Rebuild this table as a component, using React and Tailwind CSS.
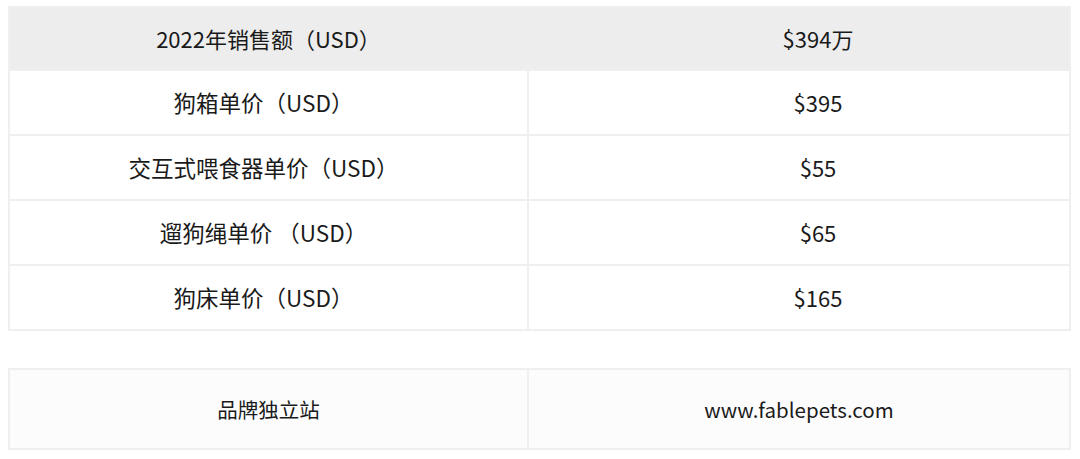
export default function App() {
  const rows = [
    ["狗箱单价（USD）", "$395"],
    ["交互式喂食器单价（USD）", "$55"],
    ["遛狗绳单价 （USD）", "$65"],
    ["狗床单价（USD）", "$165"],
  ];
  const font = { fontFamily: '"Noto Sans CJK SC", "Noto Sans", sans-serif' };
  return (
    <div className="w-[1080px] h-[459px] bg-white pt-[6px] pl-[8px] text-[#1a1a1a]" style={font}>
      <div className="w-[1063px] border-2 border-[#efefef] text-[22px]">
        <div className="flex h-[61px] bg-[#ededed]">
          <div className="w-[517px] flex items-center justify-center">2022年销售额（USD）</div>
          <div className="w-[2px]" />
          <div className="flex-1 flex items-center justify-center pl-[38px]">$394万</div>
        </div>
        {rows.map(([a, b]) => (
          <div key={a} className="flex h-[65px] border-t-2 border-[#efefef]">
            <div className="w-[517px] flex items-center justify-center whitespace-pre pr-[10px] text-[22.5px]">{a}</div>
            <div className="w-[2px] bg-[#efefef]" />
            <div className="flex-1 flex items-center justify-center pl-[38px]">{b}</div>
          </div>
        ))}
      </div>
      <div className="mt-[37px] w-[1063px] border-2 border-[#efefef] bg-[#fcfcfc] flex h-[82px] text-[20.5px]">
        <div className="w-[517px] flex items-center justify-center">品牌独立站</div>
        <div className="w-[2px] bg-[#efefef]" />
        <div className="flex-1 flex items-center justify-center">www.fablepets.com</div>
      </div>
    </div>
  );
}
